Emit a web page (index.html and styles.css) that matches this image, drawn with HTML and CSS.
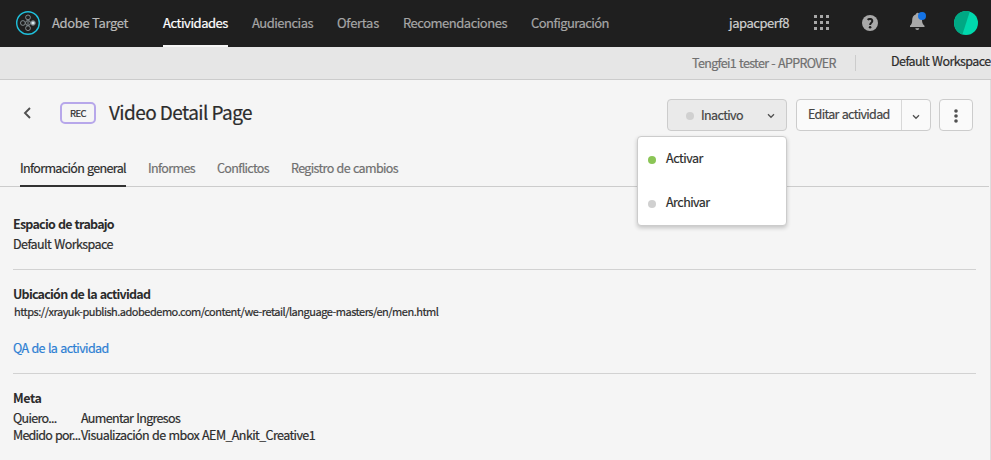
FILE: index.html
```
<!DOCTYPE html>
<html lang="es">
<head>
<meta charset="utf-8">
<title>Adobe Target</title>
<link rel="stylesheet" href="styles.css">
</head>
<body>
<header class="topbar">
  <svg class="logo" viewBox="0 0 24 24" fill="none"><circle cx="12" cy="12" r="11.3" stroke="#1fc0dc" stroke-width="1.4"/><g stroke="#8b969b" stroke-width=".9"><circle cx="12" cy="6.4" r="2.4"/><circle cx="12" cy="17.2" r="2.4"/><circle cx="6.9" cy="12" r="2.4"/><circle cx="17" cy="12" r="2.3"/><path d="M12 8.800v6M9.100 11.200c1.400 0 2-.8 2-2.200M9.100 12.800c1.400 0 2 .8 2 2.200M14.900 11.200c-1.400 0-2-.8-2-2.200M14.900 12.800c-1.400 0-2 .8-2 2.200"/></g><circle cx="17" cy="12" r="1.8" fill="#d8e8ef"/></svg>
  <span class="brand">Adobe Target</span>
  <nav class="nav"><a class="n1 active">Actividades</a><a class="n2">Audiencias</a><a class="n3">Ofertas</a><a class="n4">Recomendaciones</a><a class="n5">Configuración</a></nav>
  <span class="org">japacperf8</span>
  <svg class="apps" viewBox="0 0 15 15" fill="#a8a8a8"><path d="M0 0h3v3H0zM6 0h3v3H6zM12 0h3v3h-3zM0 6h3v3H0zM6 6h3v3H6zM12 6h3v3h-3zM0 12h3v3H0zM6 12h3v3H6zM12 12h3v3h-3z"/></svg>
  <svg class="help" viewBox="0 0 16 16"><circle cx="8" cy="8" r="8" fill="#a8a8a8"/><path d="M5.700 4.800C6.800 3.500 10.300 3.600 10.300 6.100C10.300 7.800 8.100 7.800 8.100 9.900" fill="none" stroke="#1f1f1f" stroke-width="2"/><circle cx="8.1" cy="12.2" r="1.3" fill="#1f1f1f"/></svg>
  <svg class="bell" viewBox="0 0 17 19"><path d="M7 2.200a1.500 1.500 0 0 1 3-.1C12.700 3 13 5.400 13 8c0 3.200 1 4.300 2.500 5.700V15H1v-1.300C2.500 12.300 3.200 11.200 3.200 8 3.200 5.400 4.200 3 7 2.200zM6.300 16.200h4a2 1.800 0 0 1-4 0z" fill="#a8a8a8"/><circle cx="13" cy="4" r="4" fill="#1473e6"/></svg>
  <svg class="avatar" viewBox="0 0 24 24"><circle cx="12" cy="12" r="12" fill="#00d8ad"/><path d="M15.800 .6A12 12 0 1 0 8.400 23.450z" fill="#00a884"/></svg>
</header>
<div class="subbar"><span class="tester">Tengfei1 tester - APPROVER</span><i class="divider"></i><span class="workspace">Default Workspace</span></div>
<main class="page">
  <div class="heading">
    <svg class="back" viewBox="0 0 8 12"><path d="M7 1L2 6l5 5" fill="none" stroke="#505050" stroke-width="1.900"/></svg>
    <span class="badge"><span class="rec">REC</span></span>
    <h1><span class="title">Video Detail Page</span></h1>
    <div class="actions">
      <div class="status">
        <button class="btn inactive"><i class="dot"></i><span class="t-in">Inactivo</span><svg class="chev" viewBox="0 0 8 6"><path d="M1 1.300l3 3 3-3" fill="none" stroke="#505050" stroke-width="1.300"/></svg></button>
        <div class="menu"><div class="item"><i class="dot green"></i><span class="t-act">Activar</span></div><div class="item"><i class="dot"></i><span class="t-arc">Archivar</span></div></div>
      </div>
      <div class="btn split"><span class="edit"><span class="t-edit">Editar actividad</span></span><span class="more"><svg class="chev" viewBox="0 0 8 6"><path d="M1 1.300l3 3 3-3" fill="none" stroke="#505050" stroke-width="1.300"/></svg></span></div>
      <button class="btn dots"><svg viewBox="0 0 4 14" fill="#505050"><circle cx="2" cy="2" r="1.800"/><circle cx="2" cy="7" r="1.800"/><circle cx="2" cy="12" r="1.800"/></svg></button>
    </div>
  </div>
  <div class="tabs"><a class="b1 on">Información general</a><a class="b2">Informes</a><a class="b3">Conflictos</a><a class="b4">Registro de cambios</a></div>
  <section class="s1"><h2 class="h-esp">Espacio de trabajo</h2><p><span class="v-ws">Default Workspace</span></p></section>
  <section class="s2"><h2 class="h-ubi">Ubicación de la actividad</h2><p class="url"><span class="v-url">https://xrayuk-publish.adobedemo.com/content/we-retail/language-masters/en/men.html</span></p><a class="qa">QA de la actividad</a></section>
  <section class="s3"><h2 class="h-meta">Meta</h2><dl><dt><span class="m1">Quiero...</span></dt><dd><span class="m2">Aumentar Ingresos</span></dd><dt><span class="m3">Medido por...</span></dt><dd><span class="m4">Visualización de mbox AEM_Ankit_Creative1</span></dd></dl></section>
</main>
</body>
</html>
```
FILE: styles.css
```
* { box-sizing: border-box; }
body { margin: 0; width: 991px; height: 460px; overflow: hidden; background: #f5f5f5; color: #2c2c2c; font: 12.5px/20px "Noto Sans CJK SC", sans-serif; white-space: nowrap; -webkit-text-stroke: .2px currentColor; }
h1, h2, p, dl, dd { margin: 0; }
i, svg { display: block; flex: none; }
.topbar { display: flex; align-items: center; height: 47px; padding-left: 16px; background: #1f1f1f; color: #a6a6a6; font-size: 13px; }
.logo { width: 24px; height: 24px; margin-bottom: 1px; }
.brand { width: 76px; margin: 0 35px 1px 12px; color: #b9b9b9; letter-spacing: -.33px; }
.nav { display: flex; gap: 24px; height: 47px; }
.nav a { height: 47px; padding-top: 13px; }
.nav .active { color: #fff; border-bottom: 2px solid #f5f5f5; }
.n1 { width: 65px; letter-spacing: -.45px; }
.n2 { width: 61px; letter-spacing: -.5px; }
.n3 { width: 42px; letter-spacing: -.29px; }
.n4 { width: 104px; letter-spacing: -.49px; }
.n5 { width: 78px; letter-spacing: -.55px; }
.org { width: 60px; margin: 0 25px 1px 120px; color: #d0d0d0; letter-spacing: -.45px; }
.apps { width: 15px; height: 15px; margin: 0 33px 2px 0; }
.help { width: 16px; height: 16px; margin: 0 31px 1px 0; }
.bell { width: 17px; height: 19px; margin: 0 28px 4px 0; }
.avatar { width: 24px; height: 24px; margin-bottom: 1px; }
.subbar { display: flex; height: 33px; background: #e6e6e6; border-bottom: 1px solid #ccc; padding-left: 692px; }
.tester { width: 144px; padding-top: 6px; color: #707070; letter-spacing: -.66px; word-spacing: .8px; }
.divider { width: 1px; height: 16px; margin: 8px 35px 0 19px; background: #ccc; }
.workspace { padding-top: 4px; letter-spacing: -.57px; word-spacing: .6px; }
.page { height: 380px; border-right: 1px solid #ddd; }
.heading { display: flex; height: 71px; padding-left: 23px; }
.back { width: 8px; height: 12px; margin: 27px 29px 0 0; }
.badge { width: 36px; height: 22px; margin: 22px 13px 0 0; border: 2px solid #b7a7ea; border-radius: 5px; text-align: center; font-size: 9.5px; line-height: 18px; }
.rec { letter-spacing: -.5px; }
h1 { width: 558px; font-size: 19px; line-height: 28px; font-weight: 400; padding-top: 18px; letter-spacing: -.57px; }
.actions { display: flex; gap: 8px; padding-top: 19px; }
.status { position: relative; margin-right: 1px; }
.btn { display: flex; height: 32px; margin: 0; border: 1px solid #ccc; border-radius: 4px; background: #fafafa; font: inherit; color: #444; }
.inactive { width: 120px; padding: 5px 0 0 18px; background: #eaeaea; }
.dot { width: 8px; height: 8px; border-radius: 50%; background: #d0d0d0; }
.inactive .dot { margin: 7px 7px 0 0; }
.t-in { width: 43px; margin-right: 23px; text-align: left; letter-spacing: -.6px; }
.chev { width: 8px; height: 6px; }
.inactive .chev { margin-top: 8px; }
.split { width: 135px; }
.edit { width: 105px; padding: 4px 0 0 11px; border-right: 1px solid #d8d8d8; }
.t-edit { letter-spacing: -.66px; word-spacing: .8px; }
.more { padding: 14px 0 0 10px; }
.dots { width: 34px; padding: 9px 0 0 14px; }
.dots svg { width: 4px; height: 14px; }
.menu { position: absolute; z-index: 2; top: 37px; right: 0; width: 150px; height: 90px; background: #fff; border: 1px solid #ccc; border-radius: 4px; box-shadow: 0 2px 4px rgba(0,0,0,.2); padding: 11px 0 0 10px; color: #2c2c2c; }
.item { display: flex; height: 44px; }
.item .dot { margin: 8px 10px 0 0; }
.dot.green { background: #8bc556; }
.t-act { letter-spacing: -.44px; }
.t-arc { letter-spacing: -.52px; }
.tabs { display: flex; gap: 22px; height: 36px; margin-right: 1px; padding-left: 20px; border-bottom: 1px solid #ccc; color: #707070; }
.tabs a { height: 36px; padding-top: 7px; }
.tabs .on { color: #2c2c2c; border-bottom: 2px solid #323232; }
.b1 { width: 106px; letter-spacing: -.65px; word-spacing: .8px; }
.b2 { width: 47px; letter-spacing: -.63px; }
.b3 { width: 52px; letter-spacing: -.65px; }
.b4 { letter-spacing: -.63px; word-spacing: .8px; }
h2 { font-size: 12.5px; line-height: 20px; font-weight: 700; letter-spacing: -.76px; word-spacing: .8px; -webkit-text-stroke: 0; }
.h-meta { letter-spacing: -.45px; }
section { margin: 0 14px 0 13px; }
.s1 { padding-top: 27px; height: 83px; border-bottom: 1px solid #d2d2d2; }
.s2 { padding-top: 14px; height: 104px; border-bottom: 1px solid #d2d2d2; }
.s3 { padding-top: 14px; }
.v-ws { letter-spacing: -.57px; word-spacing: .8px; }
.url { font-size: 11px; line-height: 14px; padding: 0 0 2px 1px; letter-spacing: -.49px; }
.qa { display: block; margin-top: 18px; color: #2d7fd3; letter-spacing: -.62px; word-spacing: .8px; }
dl { display: grid; grid-template-columns: 68px auto; line-height: 17px; padding-top: 1px; }
.m1 { letter-spacing: -.7px; }
.m2 { letter-spacing: -.66px; word-spacing: .8px; }
.m3 { letter-spacing: -.75px; word-spacing: .8px; }
.m4 { letter-spacing: -.59px; word-spacing: .8px; }
```
